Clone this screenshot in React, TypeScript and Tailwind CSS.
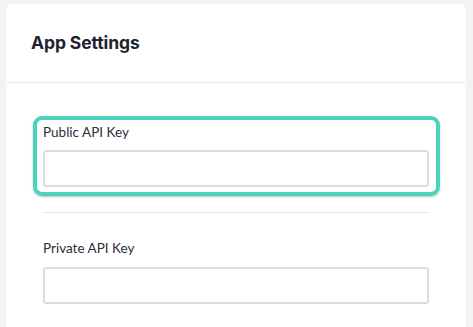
export default function App() {
  return (
    <div className="h-[327px] overflow-hidden bg-[#f3f3f3] pl-[6px] pt-[4px] font-['Lato',sans-serif]">
      <div className="w-[460px] h-[340px] rounded-[6px] bg-white">
        <div className="flex h-[79px] items-center border-b border-[#e9e9e9] px-[25px]">
          <h2 className="font-['Inter',sans-serif] text-[17.5px] font-bold tracking-[-0.1px] text-[#1f2230]">App Settings</h2>
        </div>

        <div className="px-[37px] pt-[33px]">
          <div className="-ml-[10px] -mr-[11px] rounded-[9px] border-4 border-[#4bd3bd] pl-[6px] pr-[7px] pt-[1px] pb-[5px] shadow-[0_1px_2px_rgba(0,0,0,0.25)]">
            <label className="block text-[13.5px] leading-[22px] text-[#2b2d3a]">Public API Key</label>
            <input className="mt-[7px] block h-[37px] w-full rounded-[3px] border-2 border-[#dcdcdc] bg-white outline-none" />
          </div>

          <div className="mt-[16px] border-t border-[#e5e5e5]" />

          <div className="mt-[24px]">
            <label className="block text-[13.5px] leading-[22px] text-[#2b2d3a]">Private API Key</label>
            <input className="mt-[8px] block h-[37px] w-full rounded-[3px] border-2 border-[#dcdcdc] bg-white outline-none" />
          </div>
        </div>
      </div>
    </div>
  );
}
